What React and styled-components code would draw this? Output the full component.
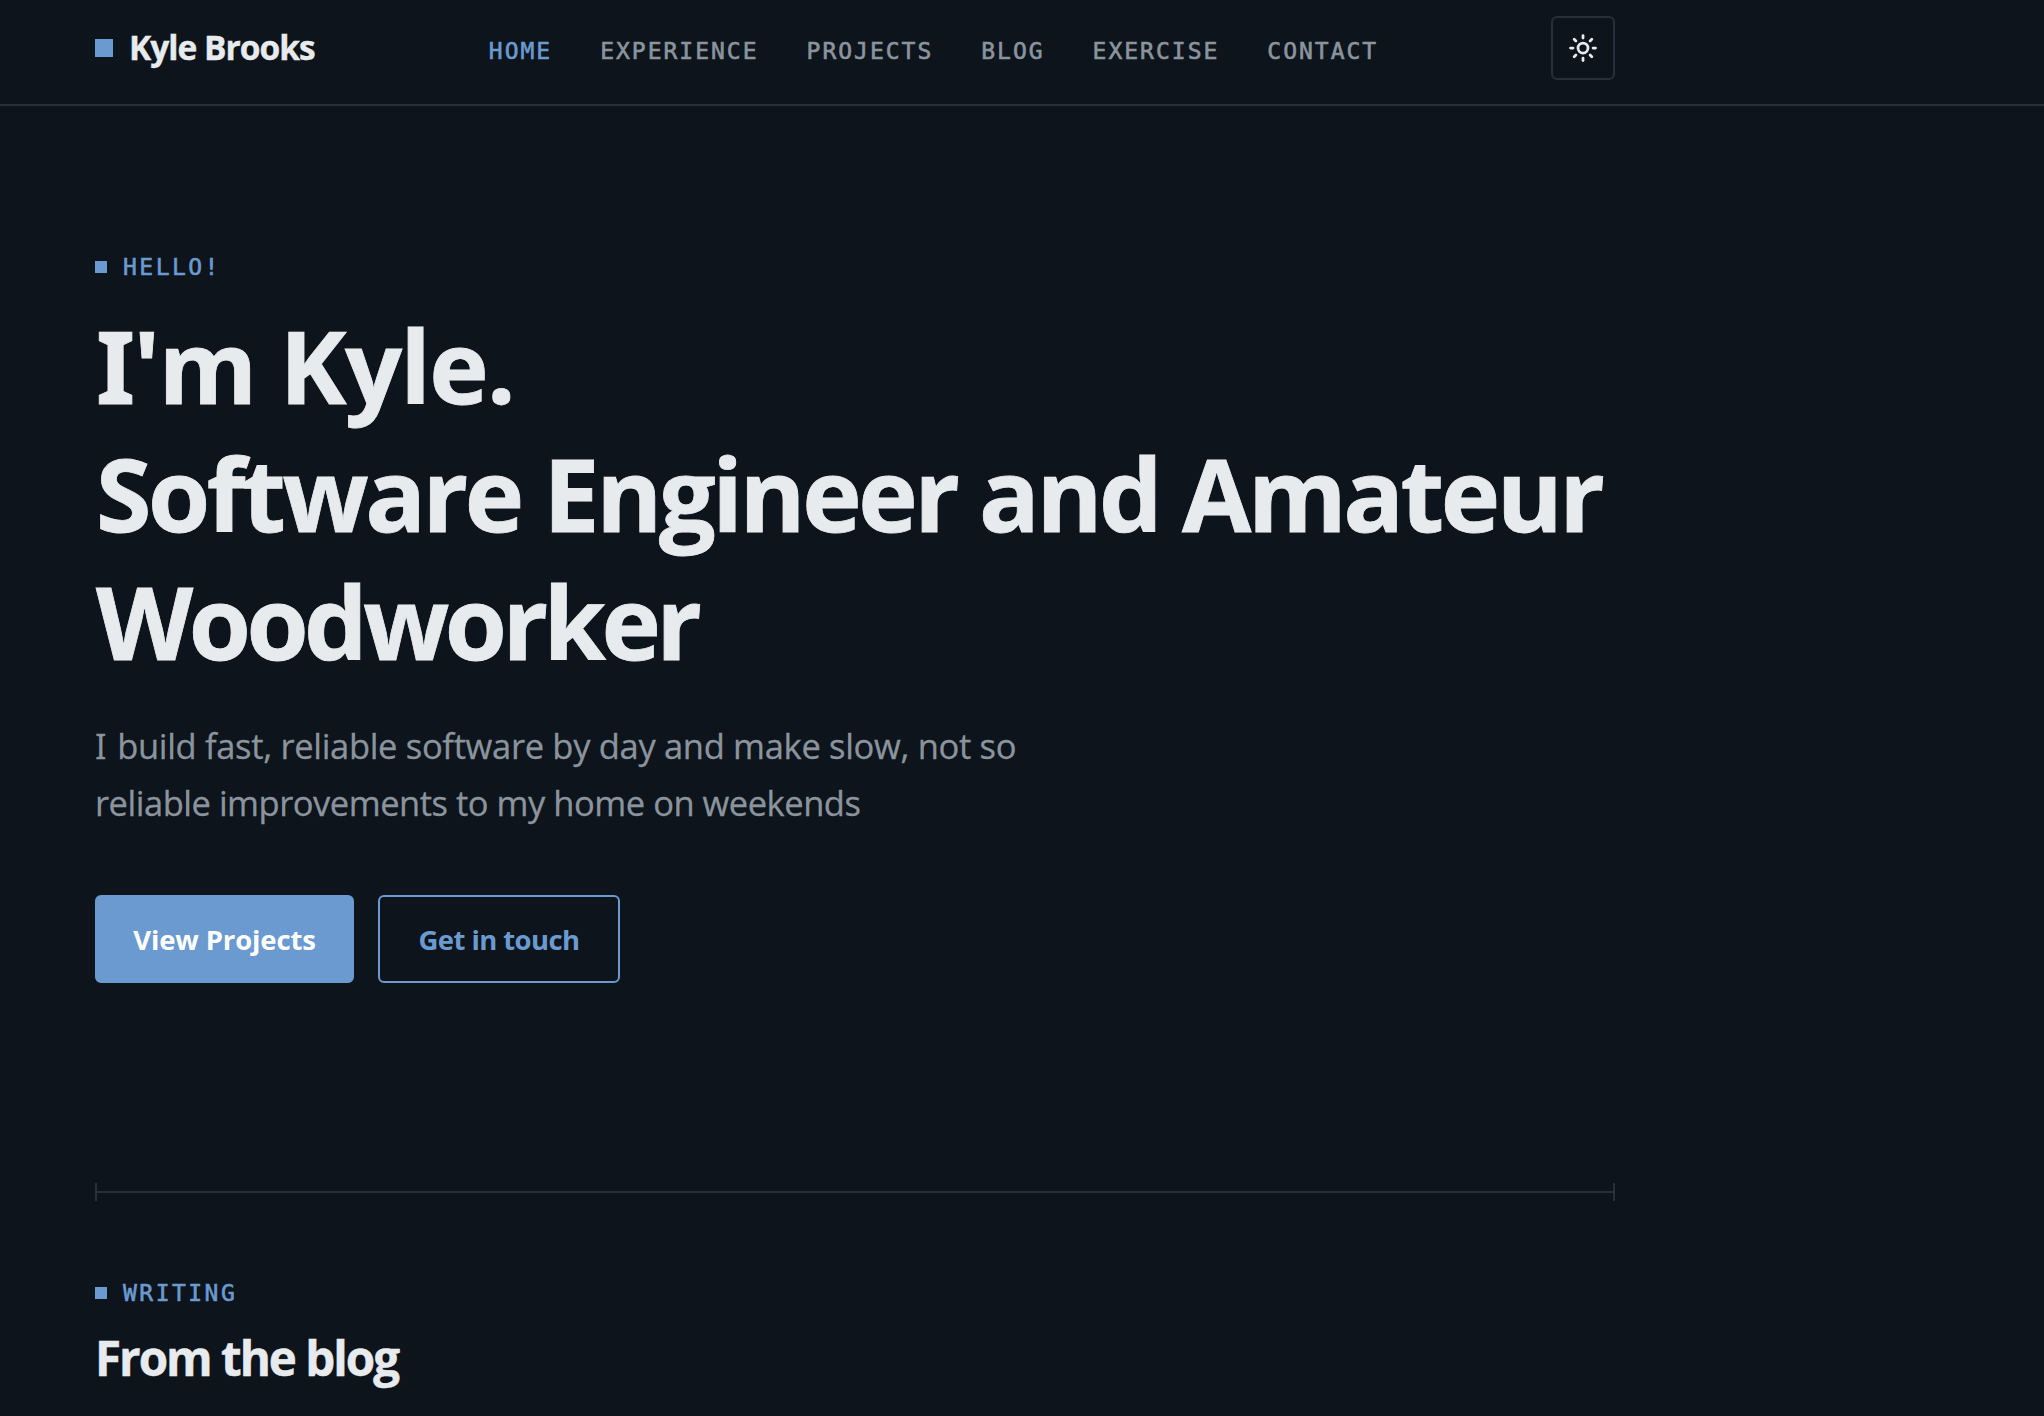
import { createGlobalStyle } from "styled-components";
import styled from "styled-components";
import { Sun } from "lucide-react";

const GlobalStyle = createGlobalStyle`
    * {
        box-sizing: border-box;
        margin: 0;
        padding: 0;
    }
    body {
        background: #0d141b;
        color: #e8ebee;
        font-family: "Open Sans", "Noto Sans", sans-serif;
        overflow: hidden;
    }
    a {
        text-decoration: none;
    }
`

const Page = styled.div`
    height: 1416px;
    overflow: hidden;
`

const Container = styled.div`
    width: 1520px;
    margin-left: 95px;
`

const StyledHeader = styled.header`
    height: 106px;
    border-bottom: 2px solid #262f3a;
`

const HeaderRow = styled(Container)`
    display: flex;
    justify-content: space-between;
    align-items: center;
    padding-top: 16px;
`

const Logo = styled.a`
    display: flex;
    align-items: center;
    gap: 16px;
    width: 221px;
    height: 64px;
    color: #e8ebee;
    font-size: 33.5px;
    font-weight: 700;
    line-height: 44px;
    letter-spacing: -1px;
    white-space: nowrap;
    -webkit-text-stroke: 0.4px currentColor;
`

const LogoText = styled.span`
    padding-bottom: 2px;
`

const Square = styled.span`
    flex: none;
    width: ${({ $size }) => $size}px;
    height: ${({ $size }) => $size}px;
    background: #6b9ad0;
`

const Nav = styled.nav`
    display: flex;
    gap: 48px;
    padding-top: 6px;
`

const NavLink = styled.a`
    color: ${({ $active }) => ($active ? "#6b9ad0" : "#8b949e")};
    font-family: "DejaVu Sans Mono", monospace;
    font-size: 23px;
    line-height: 32px;
    letter-spacing: 1.99px;
    -webkit-text-stroke: 0.6px currentColor;
`

const ThemeButton = styled.button`
    display: flex;
    align-items: center;
    justify-content: center;
    width: 64px;
    height: 64px;
    background: transparent;
    border: 2px solid #262f3a;
    border-radius: 6px;
    color: #e8ebee;
`

const Hero = styled(Container)`
    padding-top: 145px;
    height: 1077px;
`

const Label = styled.div`
    display: flex;
    align-items: center;
    gap: 16px;
    height: 32px;
    color: #6b9ad0;
    font-family: "DejaVu Sans Mono", monospace;
    font-size: 23px;
    line-height: 32px;
    letter-spacing: 2.47px;
    -webkit-text-stroke: 0.6px currentColor;
`

// capital I with serifs
const SerifI = styled.span`
    font-feature-settings: "ss01";
`

const Title = styled.h1`
    margin-top: 18px;
    padding-left: 1px;
    font-size: 100.5px;
    font-weight: 700;
    line-height: 128px;
    white-space: nowrap;
    -webkit-text-stroke: 0.8px currentColor;
`

const TitleLine = styled.span`
    display: block;
    letter-spacing: ${({ $spacing }) => $spacing}px;
`

const Lead = styled.p`
    margin-top: 32px;
    color: #8b949e;
    font-size: 34.5px;
    line-height: 57px;
    white-space: nowrap;
    -webkit-text-stroke: 0.3px currentColor;

    ${SerifI} {
        letter-spacing: 2px;
    }
`

const LeadLine = styled.span`
    display: block;
    letter-spacing: ${({ $spacing }) => $spacing}px;
`

const Actions = styled.div`
    display: flex;
    gap: 24px;
    margin-top: 64px;
`

const Button = styled.a`
    display: flex;
    align-items: center;
    justify-content: center;
    width: ${({ $width }) => $width}px;
    height: 88px;
    border: 2px solid #6b9ad0;
    border-radius: 6px;
    background: ${({ $primary }) => ($primary ? "#6b9ad0" : "transparent")};
    color: ${({ $primary }) => ($primary ? "#ffffff" : "#6b9ad0")};
    font-size: 27.5px;
    font-weight: 700;
    letter-spacing: ${({ $primary }) => ($primary ? -0.15 : -0.6)}px;
    white-space: nowrap;
`

const Divider = styled(Container)`
    display: flex;
    align-items: center;
    height: 18px;
    border: solid #262f3a;
    border-width: 0 2px;

    &::after {
        content: "";
        flex: 1;
        height: 2px;
        background: #262f3a;
    }
`

const Blog = styled(Container)`
    padding-top: 76px;
`

const Heading = styled.h2`
    margin-top: 17px;
    font-size: 47.5px;
    font-weight: 700;
    line-height: 64px;
    letter-spacing: -2px;
    -webkit-text-stroke: 0.5px currentColor;
`

const links = ["Home", "Experience", "Projects", "Blog", "Exercise", "Contact"]

const Header = () => (
    <StyledHeader>
        <HeaderRow>
            <Logo href="#home">
                <Square $size={18}/>
                <LogoText>Kyle Brooks</LogoText>
            </Logo>
            <Nav>
                {links.map((link) => (
                    <NavLink key={link} href={`#${link.toLowerCase()}`} $active={link === "Home"}>
                        {link.toUpperCase()}
                    </NavLink>
                ))}
            </Nav>
            <ThemeButton aria-label="Toggle theme">
                <Sun size={30} strokeWidth={2.2}/>
            </ThemeButton>
        </HeaderRow>
    </StyledHeader>
)

export default function App() {
    return (
        <Page>
            <GlobalStyle/>
            <Header/>
            <Hero as="section">
                <Label>
                    <Square $size={12}/>
                    HELLO!
                </Label>
                <Title>
                    <TitleLine $spacing={-1.7}><SerifI>I</SerifI>'m Kyle.</TitleLine>
                    <TitleLine $spacing={-3.4}>Software Engineer and Amateur</TitleLine>
                    <TitleLine $spacing={-4.5}>Woodworker</TitleLine>
                </Title>
                <Lead>
                    <LeadLine $spacing={-0.32}><SerifI>I</SerifI> build fast, reliable software by day and make slow, not so</LeadLine>
                    <LeadLine $spacing={-0.48}>reliable improvements to my home on weekends</LeadLine>
                </Lead>
                <Actions>
                    <Button href="#projects" $primary $width={259}>View Projects</Button>
                    <Button href="#contact" $width={242}>Get in touch</Button>
                </Actions>
            </Hero>
            <Divider/>
            <Blog as="section">
                <Label>
                    <Square $size={12}/>
                    WRITING
                </Label>
                <Heading>From the blog</Heading>
            </Blog>
        </Page>
    );
}
